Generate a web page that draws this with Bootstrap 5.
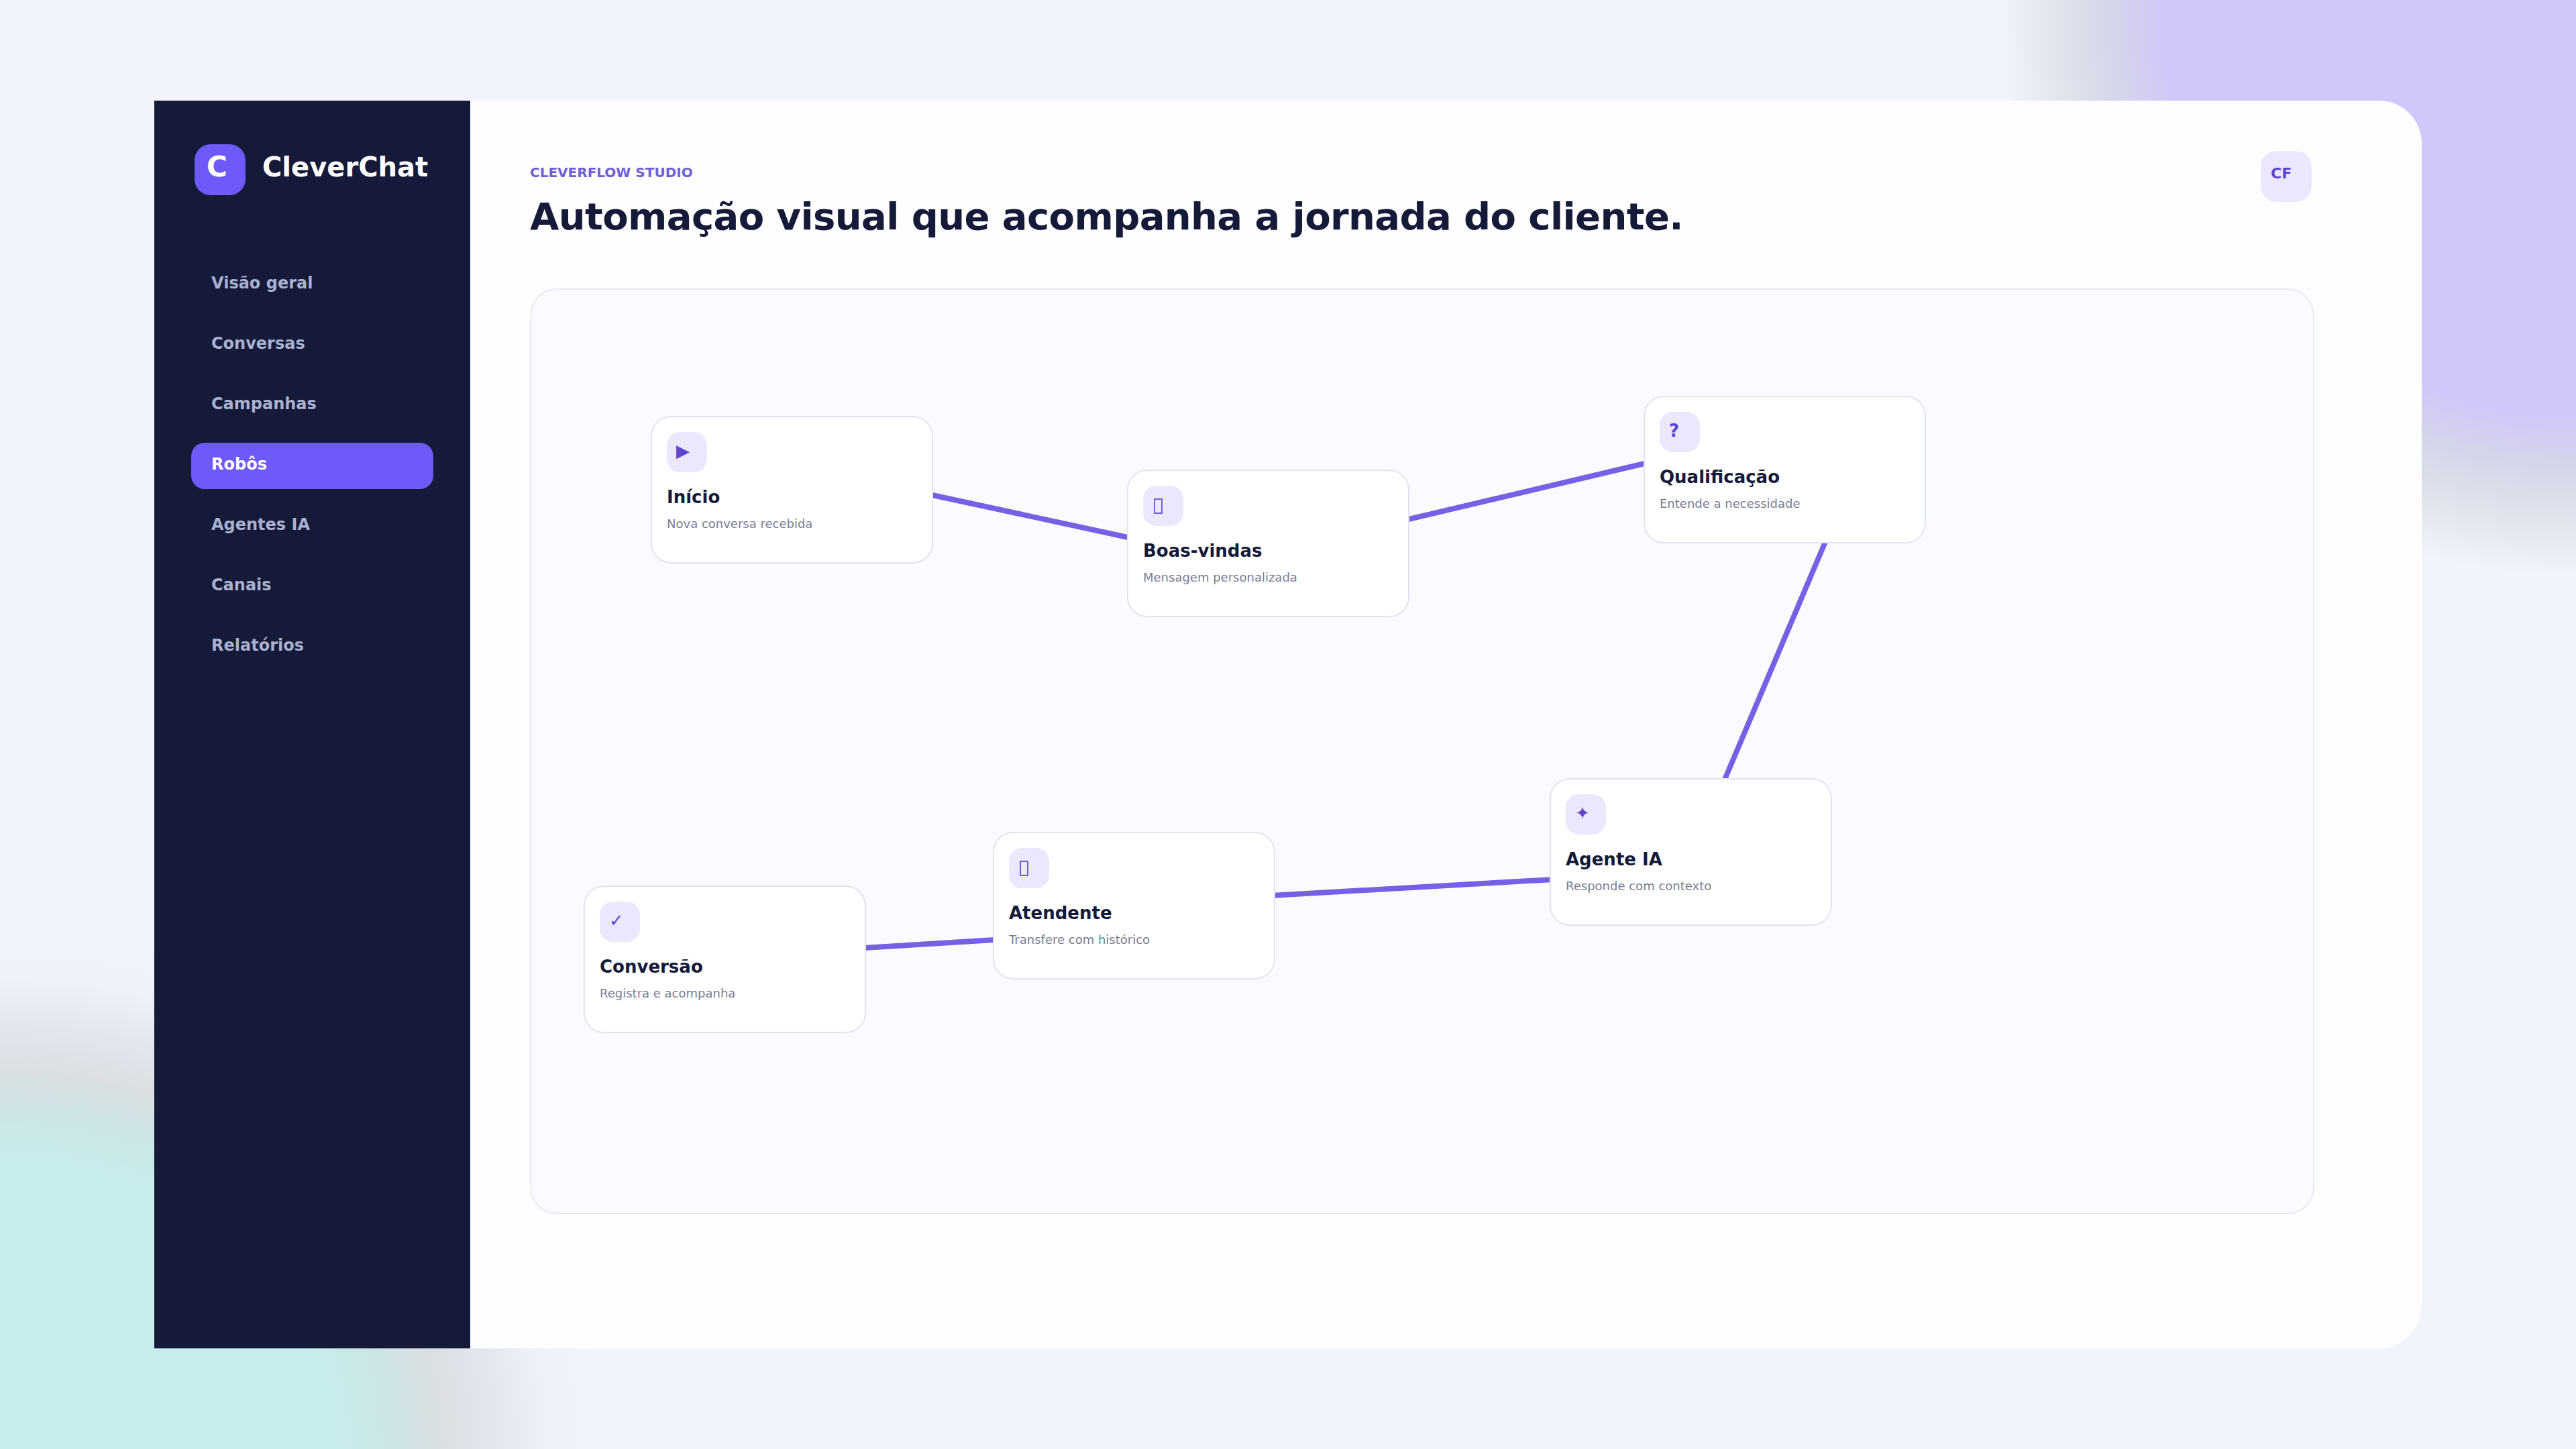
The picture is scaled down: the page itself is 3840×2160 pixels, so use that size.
<!DOCTYPE html>
<html lang="pt-BR">
<head>
<meta charset="utf-8">
<title>CleverChat</title>
<link href="https://cdn.jsdelivr.net/npm/bootstrap@5.3.0/dist/css/bootstrap.min.css" rel="stylesheet">
<style>
html, body { height: 100%; }
body {
  font-family: "DejaVu Sans", sans-serif;
  background-color: #f1f4fd;
  background-image:
    radial-gradient(circle 860px at 3840px 0px, #cfc8fa 0, #cfc8fa 72%, #d4d4ea 80%, #dcdfea 87%, #e6e8f0 93%, rgba(241,244,253,0) 100%),
    radial-gradient(ellipse 900px 770px at 0px 2160px, #c7ecec 0, #c7ecec 56%, #cde5e5 65%, #d9dfe3 73%, #e4e6ee 82%, #eef1fa 91%, rgba(241,244,253,0) 100%);
  overflow: hidden;
}
.cf-shell { width: 3380px; height: 1860px; }
.cf-side { width: 471px; padding: 65px 55px 0; background: #141a38; }
.cf-logo { width: 76px; height: 76px; margin-left: 5px; border-radius: 24px; background: #6e5af8; color: #fff; font-size: 42px; font-weight: 700; padding: 0 0 10px 18px; }
.cf-brand { color: #fff; font-size: 40px; font-weight: 700; line-height: 48px; padding-bottom: 8px; margin-left: 25px; }
.cf-menu { margin-top: 99px; gap: 21px; }
.cf-menu .nav-link { color: #a9b1d0; font-size: 24px; font-weight: 700; line-height: 30px; height: 69px; padding: 17px 30px 22px; border-radius: 20px; }
.cf-menu .nav-link.active { background: #6e5af8; color: #fff; }
.cf-main { background: #fefeff; border-radius: 0 64px 64px 0; padding: 75px 160px 0 89px; }
.cf-head { height: 205px; }
.cf-eyebrow { color: #6f5fd6; font-size: 20px; font-weight: 700; line-height: 24px; margin: 20px 0 20px; }
.cf-title { color: #141a38; font-size: 56px; font-weight: 700; line-height: 68px; letter-spacing: -.6px; margin: 0; }
.cf-avatar { width: 76px; height: 76px; border-radius: 24px; background: #ebe7fd; color: #5b45cc; font-size: 22px; font-weight: 700; padding: 0 0 10px 15px; margin-right: 4px; }
.cf-canvas { height: 1380px; background: #fafbff; border: 2px solid #e8eaf4; border-radius: 40px; }
.cf-wires { left: 0; top: 0; overflow: visible; }
.cf-wires line { stroke: #7661e6; stroke-width: 8; }
.cf-node { width: 421px; height: 220px; padding: 22px; background: #fff; border: 2px solid #e1e3f0; border-radius: 30px; }
.cf-ico { width: 60px; height: 60px; border-radius: 20px; background: #ebe7fd; color: #5b45cc; font-size: 26px; font-weight: 700; padding: 0 0 4px 14px; }
.cf-tofu { display: block; width: 13px; height: 23px; margin: 4px 0 0 2px; border: 2px solid #6f5ed4; }
.cf-name { color: #141a38; font-size: 26px; font-weight: 700; line-height: 32px; margin: 21px 0 12px; }
.cf-desc { color: #787d92; font-size: 18px; line-height: 24px; margin: 0; }
.n1 { left: 178px; top: 188px; }
.n2 { left: 888px; top: 268px; }
.n3 { left: 1658px; top: 158px; }
.n4 { left: 1518px; top: 728px; }
.n5 { left: 688px; top: 808px; }
.n6 { left: 78px; top: 888px; }
</style>
</head>
<body class="d-flex align-items-center justify-content-center">
<div class="cf-shell d-flex">
  <aside class="cf-side flex-shrink-0">
    <div class="d-flex align-items-center">
      <div class="cf-logo d-flex align-items-center">C</div>
      <div class="cf-brand">CleverChat</div>
    </div>
    <nav class="nav flex-column cf-menu">
      <a class="nav-link" href="#">Visão geral</a>
      <a class="nav-link" href="#">Conversas</a>
      <a class="nav-link" href="#">Campanhas</a>
      <a class="nav-link active" href="#">Robôs</a>
      <a class="nav-link" href="#">Agentes IA</a>
      <a class="nav-link" href="#">Canais</a>
      <a class="nav-link" href="#">Relatórios</a>
    </nav>
  </aside>
  <main class="cf-main flex-grow-1">
    <header class="cf-head d-flex justify-content-between align-items-start">
      <div>
        <div class="cf-eyebrow">CLEVERFLOW STUDIO</div>
        <h1 class="cf-title">Automação visual que acompanha a jornada do cliente.</h1>
      </div>
      <div class="cf-avatar d-flex align-items-center">CF</div>
    </header>
    <section class="cf-canvas position-relative">
      <svg class="cf-wires position-absolute" width="2656" height="1376" viewBox="0 0 2656 1376" aria-hidden="true">
        <line x1="570" y1="300" x2="917" y2="375"/>
        <line x1="1274" y1="350" x2="1693" y2="251"/>
        <line x1="1942" y1="345" x2="1765" y2="763"/>
        <line x1="1559" y1="877" x2="1068" y2="905"/>
        <line x1="707" y1="968" x2="480" y2="982"/>
      </svg>
      <article class="cf-node position-absolute n1">
        <div class="cf-ico d-flex align-items-center">▶</div>
        <div class="cf-name">Início</div>
        <p class="cf-desc">Nova conversa recebida</p>
      </article>
      <article class="cf-node position-absolute n2">
        <div class="cf-ico d-flex align-items-center"><span class="cf-tofu"></span></div>
        <div class="cf-name">Boas-vindas</div>
        <p class="cf-desc">Mensagem personalizada</p>
      </article>
      <article class="cf-node position-absolute n3">
        <div class="cf-ico d-flex align-items-center">?</div>
        <div class="cf-name">Qualificação</div>
        <p class="cf-desc">Entende a necessidade</p>
      </article>
      <article class="cf-node position-absolute n4">
        <div class="cf-ico d-flex align-items-center">✦</div>
        <div class="cf-name">Agente IA</div>
        <p class="cf-desc">Responde com contexto</p>
      </article>
      <article class="cf-node position-absolute n5">
        <div class="cf-ico d-flex align-items-center"><span class="cf-tofu"></span></div>
        <div class="cf-name">Atendente</div>
        <p class="cf-desc">Transfere com histórico</p>
      </article>
      <article class="cf-node position-absolute n6">
        <div class="cf-ico d-flex align-items-center">✓</div>
        <div class="cf-name">Conversão</div>
        <p class="cf-desc">Registra e acompanha</p>
      </article>
    </section>
  </main>
</div>
<script src="https://cdn.jsdelivr.net/npm/bootstrap@5.3.0/dist/js/bootstrap.bundle.min.js"></script>
</body>
</html>
